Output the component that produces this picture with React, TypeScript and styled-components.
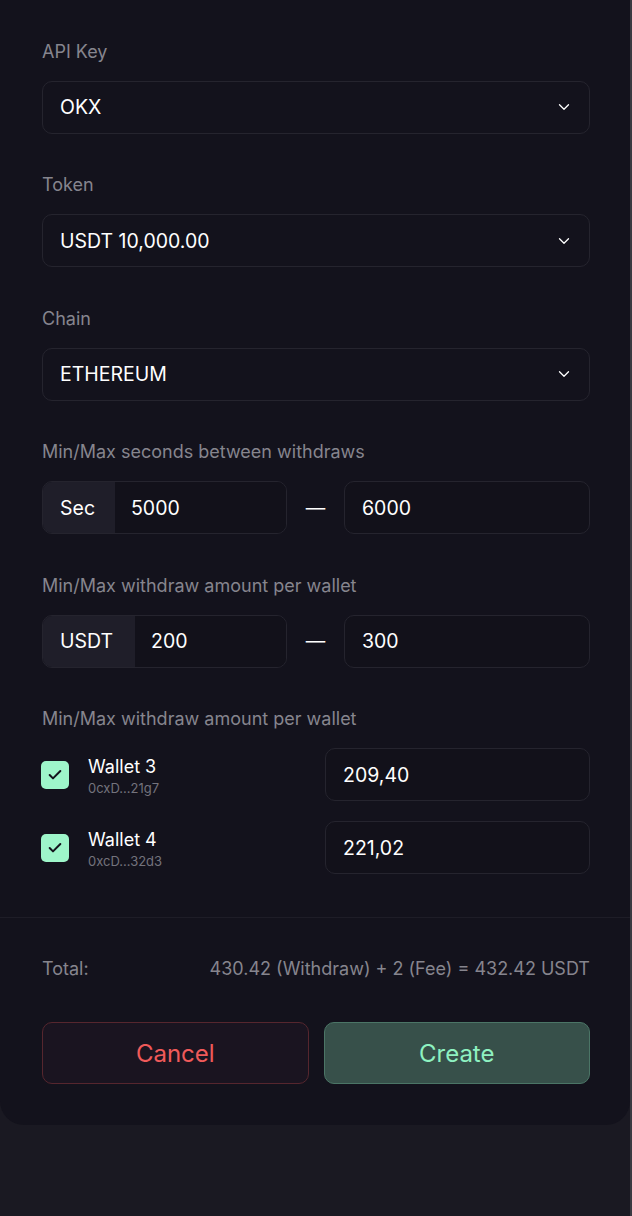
import React from "react";
import styled, { createGlobalStyle } from "styled-components";
import { ChevronDown, Check } from "lucide-react";

const Global = createGlobalStyle`
  html, body { margin: 0; padding: 0; background: #1a1922; }
  body { font-family: Inter, "Noto Sans", "Liberation Sans", sans-serif; -webkit-font-smoothing: antialiased; }
  * { box-sizing: border-box; }
`;

const Page = styled.div`
  width: 632px;
  min-height: 1216px;
  background: #1a1922;
  border-right: 2px solid #3a3941;
`;

const Panel = styled.div`
  width: 630px;
  background: #13121c;
  border-radius: 0 0 24px 24px;
`;

const Body = styled.div`
  padding: 40.5px 40px 43px 42px;
  display: flex;
  flex-direction: column;
  gap: 40.5px;
`;

const Field = styled.div`
  display: flex;
  flex-direction: column;
  gap: 18px;
`;

const Label = styled.div`
  font-size: 18px;
  line-height: 22px;
  color: #86858e;
`;

const SelectBox = styled.div`
  height: 53px;
  border: 1.5px solid #25242e;
  border-radius: 10px;
  display: flex;
  align-items: center;
  justify-content: space-between;
  padding: 0 16px 0 17px;
  color: #ffffff;
  font-size: 19.5px;
`;

const RangeRow = styled.div`
  display: grid;
  grid-template-columns: 245px 57px 1fr;
  align-items: center;
`;

const InputGroup = styled.div`
  height: 53px;
  border: 1.5px solid #25242e;
  border-radius: 10px;
  display: flex;
  overflow: hidden;
`;

const Addon = styled.div<{ $w: number }>`
  width: ${(p) => p.$w}px;
  flex: none;
  background: #1f1e29;
  display: flex;
  align-items: center;
  padding-left: 17px;
  color: #fff;
  font-size: 19.5px;
`;

const InputText = styled.div`
  flex: 1;
  display: flex;
  align-items: center;
  padding-left: 16px;
  color: #fff;
  font-size: 19.5px;
  background: #12111a;
`;

const Dash = styled.div`
  text-align: center;
  color: #fff;
  font-size: 19.5px;
`;

const Input = styled.div`
  height: 53px;
  border: 1.5px solid #25242e;
  border-radius: 10px;
  display: flex;
  align-items: center;
  padding-left: 17px;
  color: #fff;
  font-size: 19.5px;
  background: #12111a;
`;

const WalletList = styled.div`
  display: flex;
  flex-direction: column;
  gap: 20px;
`;

const WalletRow = styled.div`
  display: grid;
  grid-template-columns: 1fr 265px;
  align-items: center;
`;

const WalletInfo = styled.div`
  display: flex;
  align-items: center;
  gap: 19px;
  margin-left: -1px;
`;

const CheckBox = styled.div`
  width: 28px;
  height: 28px;
  border-radius: 5px;
  background: #9ef6ca;
  display: flex;
  align-items: center;
  justify-content: center;
  color: #14131c;
`;

const WalletText = styled.div`
  display: flex;
  flex-direction: column;
  margin-top: 5px;
`;

const WalletName = styled.div`
  color: #fff;
  font-size: 18px;
  line-height: 22px;
`;

const WalletAddr = styled.div`
  color: #74737c;
  font-size: 13px;
  line-height: 20px;
`;

const Footer = styled.div`
  border-top: 1px solid #1e1d27;
  padding: 40px 40px 41px 42px;
  display: flex;
  flex-direction: column;
  gap: 42px;
`;

const TotalRow = styled.div`
  display: flex;
  justify-content: space-between;
  font-size: 18px;
  line-height: 22px;
  color: #86858e;
`;

const Buttons = styled.div`
  display: grid;
  grid-template-columns: 1fr 1fr;
  gap: 15px;
`;

const Button = styled.button<{ $variant: "cancel" | "create" }>`
  height: 62px;
  border-radius: 10px;
  font-family: inherit;
  font-size: 24px;
  border: 1.5px solid ${(p) => (p.$variant === "cancel" ? "#56262e" : "#4b7566")};
  background: ${(p) => (p.$variant === "cancel" ? "#1a1420" : "#37504a")};
  color: ${(p) => (p.$variant === "cancel" ? "#f05a5a" : "#8ef2c1")};
`;

const Select = ({ value }: { value: string }) => (
  <SelectBox>
    <span>{value}</span>
    <ChevronDown size={18} strokeWidth={1.75} color="#fff" />
  </SelectBox>
);

const wallets = [
  { name: "Wallet 3", addr: "0cxD...21g7", amount: "209,40" },
  { name: "Wallet 4", addr: "0xcD...32d3", amount: "221,02" },
];

export default function App() {
  return (
    <>
      <Global />
      <Page>
        <Panel>
          <Body>
            <Field>
              <Label>API Key</Label>
              <Select value="OKX" />
            </Field>
            <Field>
              <Label>Token</Label>
              <Select value="USDT 10,000.00" />
            </Field>
            <Field>
              <Label>Chain</Label>
              <Select value="ETHEREUM" />
            </Field>
            <Field>
              <Label>Min/Max seconds between withdraws</Label>
              <RangeRow>
                <InputGroup>
                  <Addon $w={72}>Sec</Addon>
                  <InputText>5000</InputText>
                </InputGroup>
                <Dash>—</Dash>
                <Input>6000</Input>
              </RangeRow>
            </Field>
            <Field>
              <Label>Min/Max withdraw amount per wallet</Label>
              <RangeRow>
                <InputGroup>
                  <Addon $w={92}>USDT</Addon>
                  <InputText>200</InputText>
                </InputGroup>
                <Dash>—</Dash>
                <Input>300</Input>
              </RangeRow>
            </Field>
            <Field>
              <Label>Min/Max withdraw amount per wallet</Label>
              <WalletList>
                {wallets.map((w) => (
                  <WalletRow key={w.name}>
                    <WalletInfo>
                      <CheckBox>
                        <Check size={16} strokeWidth={3} />
                      </CheckBox>
                      <WalletText>
                        <WalletName>{w.name}</WalletName>
                        <WalletAddr>{w.addr}</WalletAddr>
                      </WalletText>
                    </WalletInfo>
                    <Input>{w.amount}</Input>
                  </WalletRow>
                ))}
              </WalletList>
            </Field>
          </Body>
          <Footer>
            <TotalRow>
              <span>Total:</span>
              <span>430.42 (Withdraw) + 2 (Fee) = 432.42 USDT</span>
            </TotalRow>
            <Buttons>
              <Button $variant="cancel">Cancel</Button>
              <Button $variant="create">Create</Button>
            </Buttons>
          </Footer>
        </Panel>
      </Page>
    </>
  );
}
